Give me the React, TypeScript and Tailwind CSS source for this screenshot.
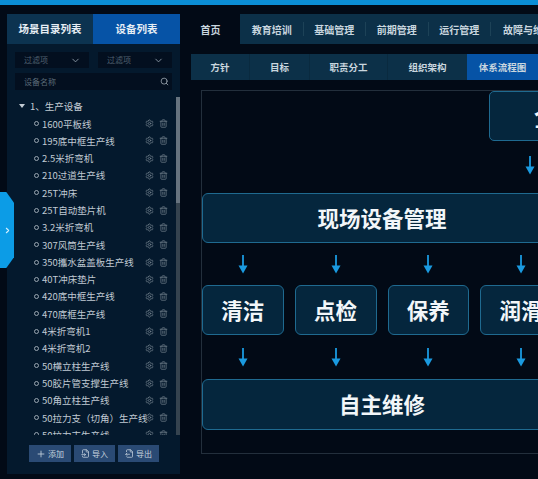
import React from "react";
import { ChevronDown, ChevronRight, Search, Plus, Settings, Trash2, FileInput, FileOutput } from "lucide-react";

const items = ["1600平板线","195底中框生产线","2.5米折弯机","210过道生产线","25T冲床","25T自动垫片机","3.2米折弯机","307风筒生产线","350攜水盆盖板生产线","40T冲床垫片","420底中框生产线","470底框生产线","4米折弯机1","4米折弯机2","50横立柱生产线","50胶片管支撑生产线","50角立柱生产线","50拉力支（切角）生产线","50拉力支生产线"];
const font = "[font-family:'Noto_Sans_CJK_SC',sans-serif]";

function Arrow() {
  return (
    <svg width="10" height="19" viewBox="0 0 10 19" className="block">
      <path d="M5 0V11" stroke="#1a9ae0" strokeWidth="1.8" />
      <path d="M0.5 10.5H9.5L5 18.5Z" fill="#1a9ae0" />
    </svg>
  );
}

function Arrows({ tall }: { tall?: boolean }) {
  return (
    <div className={`grid grid-cols-4 gap-[11px] items-center ${tall ? "h-[44px]" : "h-[42px]"}`}>
      {[0, 1, 2, 3].map((i) => (
        <div key={i} className="flex justify-center"><Arrow /></div>
      ))}
    </div>
  );
}

export default function App() {
  return (
    <div className={`relative h-[479px] w-[538px] overflow-hidden bg-[#020a16] ${font}`}>
      <div className="h-[5px] bg-[#0b8ed6]" />
      <div className="flex pt-[9px] pl-[7px]">
        <aside className="flex h-[460px] w-[173px] shrink-0 flex-col bg-[#04192d]">
          <div className="flex h-[30px] shrink-0 text-[10.5px] font-bold text-[#e6eef5]">
            <div className="flex w-[86px] items-center justify-center bg-[#0c3350]">场景目录列表</div>
            <div className="flex w-[87px] items-center justify-center bg-[#0653a6]">设备列表</div>
          </div>
          <div className="mt-2 flex gap-[9px] pl-2">
            {[0, 1].map((i) => (
              <div key={i} className="flex h-4 w-[74px] items-center justify-between bg-[#030f1f] pl-[9px] pr-2 text-[8px] text-[#50606f]">
                过滤项
                <ChevronDown size={11} className="text-[#8b98a5]" />
              </div>
            ))}
          </div>
          <div className="mx-2 mt-[5px] flex h-[17px] items-center justify-between bg-[#030f1f] pl-[9px] pr-[3px] text-[8px] text-[#5b6a78]">
            设备名称
            <Search size={9} className="text-[#aab4bd]" />
          </div>
          <div className="relative mt-[7px] h-[338px] overflow-hidden">
            <div className="absolute right-0 top-0 h-[106px] w-[4px] bg-[#66737f]" />
            <div className="absolute right-0 top-[106px] bottom-0 w-[4px] bg-[#35434f]" />
            <div className="flex h-[18px] items-center pl-3 text-[9.5px] text-[#c3ccd4]">
              <span className="mr-[5px] h-0 w-0 border-x-[3px] border-t-[4px] border-x-transparent border-t-[#c3ccd4]" />
              1、生产设备
            </div>
            {items.map((t) => (
              <div key={t} className="flex h-[17.3px] items-center pl-[27px] text-[9.5px] whitespace-nowrap text-[#c0cad3]">
                <span className="mr-[3px] h-[5px] w-[5px] shrink-0 rounded-full border border-[#9aa6b1]" />
                <span className="w-[100px] shrink-0">{t}</span>
                <Settings size={9} className="ml-auto shrink-0 text-[#6f7e8a]" />
                <Trash2 size={9} className="ml-[5px] mr-3 shrink-0 text-[#6f7e8a]" />
              </div>
            ))}
          </div>
          <div className="mt-[10px] flex gap-[3px] pl-[22px] text-[8px] text-[#c7d3df]">
            <div className="flex h-[17px] w-[42px] items-center justify-center gap-[2px] bg-[#2a4a74]"><Plus size={10} />添加</div>
            <div className="flex h-[17px] w-[41px] items-center justify-center gap-[2px] bg-[#2a4a74]"><FileInput size={9} />导入</div>
            <div className="flex h-[17px] w-[41px] items-center justify-center gap-[2px] bg-[#2a4a74]"><FileOutput size={9} />导出</div>
          </div>
        </aside>

        <main className="ml-[7px] w-[351px] shrink-0">
          <div className="flex h-[30px] text-[10px] font-bold whitespace-nowrap text-[#c9d6df]">
            <div className="flex w-[53px] shrink-0 items-center justify-center bg-[#020a16] pr-[6px]">首页</div>
            <div className="flex flex-1 items-center overflow-hidden bg-[#0c3048] pl-[1px]">
              {["教育培训", "基础管理", "前期管理", "运行管理"].map((t) => (
                <div key={t} className="flex h-[14px] w-[62.5px] shrink-0 items-center justify-center border-r border-[#1d4257]">{t}</div>
              ))}
              <div className="flex h-[14px] w-[74px] shrink-0 items-center justify-center">故障与维修</div>
            </div>
          </div>
          <div className="mt-[10px] ml-1 flex h-[26px] text-[9.5px] font-bold text-[#c9d6df] whitespace-nowrap">
            <div className="flex w-[59px] items-center justify-center border-r border-[#0a2a3f] bg-[#0c3048]">方针</div>
            <div className="flex w-[60px] items-center justify-center border-r border-[#0a2a3f] bg-[#0c3048]">目标</div>
            <div className="flex w-[78px] items-center justify-center border-r border-[#0a2a3f] bg-[#0c3048]">职责分工</div>
            <div className="flex w-[79px] items-center justify-center bg-[#0c3048]">组织架构</div>
            <div className="flex w-[71px] items-center justify-center bg-[#0653a6]">体系流程图</div>
          </div>
          <div className="ml-[14px] mt-[10px] h-[364px] w-[420px] border border-[#232f3c]">
            <div className="flex w-[360px] flex-col">
              <div className="ml-[287px] flex h-[50px] w-[138px] shrink-0 items-center justify-center rounded-[5px] border border-[#1f6a90] bg-[#05263d] text-[24px] font-bold text-[#f2f6f9]">
                全员
              </div>
              <div className="ml-[323px] flex h-[52px] items-center pb-1"><Arrow /></div>
              <div className="flex h-[50px] items-center justify-center rounded-[6px] border border-[#1f6a90] bg-[#05263d] text-[21.5px] font-bold text-[#f2f6f9]">现场设备管理</div>
              <Arrows />
              <div className="grid grid-cols-4 gap-[11px]">
                {["清洁", "点检", "保养", "润滑"].map((t) => (
                  <div key={t} className="flex h-[50px] items-center justify-center rounded-[6px] border border-[#1f6a90] bg-[#05263d] text-[21.5px] font-bold text-[#f2f6f9]">{t}</div>
                ))}
              </div>
              <Arrows tall />
              <div className="flex h-[51px] items-center justify-center rounded-[6px] border border-[#1f6a90] bg-[#05263d] text-[21.5px] font-bold text-[#f2f6f9]">自主维修</div>
            </div>
          </div>
        </main>
      </div>
      <div className="absolute left-0 top-[192px] flex h-[76px] w-[14px] items-center justify-center bg-[#0c9ce6] [clip-path:polygon(0_0,45%_0,100%_14%,100%_86%,45%_100%,0_100%)]">
        <ChevronRight size={9} strokeWidth={3} className="text-[#cfeeff]" />
      </div>
    </div>
  );
}
